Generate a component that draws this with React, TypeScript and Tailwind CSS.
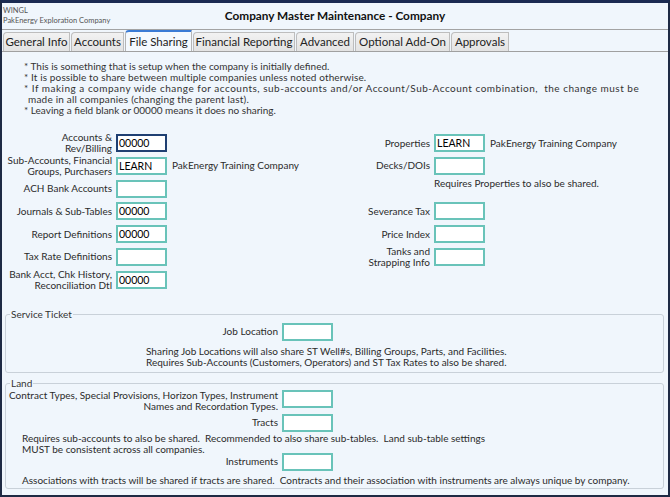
import React from 'react'

const font = { fontFamily: 'Lato, "Open Sans", sans-serif' }

const tabs = [
  { label: 'General Info', w: 'w-[67px]' },
  { label: 'Accounts', w: 'w-[53px]' },
  { label: 'File Sharing', w: 'w-[67px]', active: true },
  { label: 'Financial Reporting', w: 'w-[102px]' },
  { label: 'Advanced', w: 'w-[58px]' },
  { label: 'Optional Add-On', w: 'w-[95px]' },
  { label: 'Approvals', w: 'w-[58px]' },
]

function Box({ value = '', focused = false }: { value?: string; focused?: boolean }) {
  return (
    <input
      readOnly
      value={value}
      className={`h-[18px] w-[51px] shrink-0 bg-white px-[1px] text-[10.5px] text-black outline-none border-2 ${
        focused ? 'border-[#1f3f72]' : 'border-[#69c3b9]'
      }`}
    />
  )
}

function Row({
  label,
  value,
  focused,
  note,
  labelW,
}: {
  label: React.ReactNode
  value?: string
  focused?: boolean
  note?: string
  labelW: string
}) {
  return (
    <div className="flex h-[18px] items-center">
      <div className={`${labelW} shrink-0 pr-[4px] text-right leading-[11px]`}>{label}</div>
      <Box value={value} focused={focused} />
      {note && <span className="ml-[5px] whitespace-nowrap">{note}</span>}
    </div>
  )
}

export default function App() {
  return (
    <div
      className="flex h-[497px] w-[670px] flex-col overflow-hidden border-2 border-t-[3px] border-[#1e2a44] border-t-[#1b2b52] bg-[#f0f6fc] text-[10px] text-[#2b2b2b]"
      style={font}
    >
      {/* Header */}
      <div className="grid h-[26px] shrink-0 grid-cols-[1fr_auto_1fr] items-center">
        <div className="pl-[1px] text-[7.5px] leading-[10px] text-[#555]">
          <div>WINGL</div>
          <div>PakEnergy Exploration Company</div>
        </div>
        <div className="text-[11.8px] font-bold text-[#111]">Company Master Maintenance - Company</div>
        <div />
      </div>
      <div className="h-px shrink-0 bg-[#a3a3a3]" />

      {/* Tabs */}
      <div className="flex h-[22px] shrink-0 items-end gap-[1px] border-b border-[#a0a0a0] pl-[1px]">
        {tabs.map((t) => (
          <div
            key={t.label}
            className={`${t.w} flex shrink-0 items-center justify-center rounded-tl-[4px] border border-b-0 text-[11.5px] text-[#222] ${
              t.active
                ? 'h-[21px] border-[#b5b5b5] border-t-2 border-t-[#3a7bd5] bg-[#f4f9fe]'
                : 'h-[19px] border-[#bdbdbd] bg-gradient-to-b from-[#f2f2f2] to-[#e3e3e3]'
            }`}
          >
            {t.label}
          </div>
        ))}
      </div>

      {/* Notes */}
      <div className="pl-[22px] pt-[9px] leading-[11px] text-[#333]">
        <div>* This is something that is setup when the company is initially defined.</div>
        <div className="tracking-[0.12px]">* It is possible to share between multiple companies unless noted otherwise.</div>
        <div className="whitespace-nowrap tracking-[0.5px]">
          * If making a company wide change for accounts, sub-accounts and/or Account/Sub-Account combination,&nbsp; the change must be
        </div>
        <div className="pl-[4px] tracking-[0.2px]">made in all companies (changing the parent last).</div>
        <div>* Leaving a field blank or 00000 means it does no sharing.</div>
      </div>

      {/* File sharing fields */}
      <div className="mt-[18px] flex">
        <div className="flex w-[348px] shrink-0 flex-col gap-[4.8px]">
          <Row labelW="w-[114px]" value="00000" focused label={<>Accounts &amp;<br />Rev/Billing</>} />
          <Row
            labelW="w-[114px]"
            value="LEARN"
            note="PakEnergy Training Company"
            label={<>Sub-Accounts, Financial<br />Groups, Purchasers</>}
          />
          <Row labelW="w-[114px]" label="ACH Bank Accounts" />
          <Row labelW="w-[114px]" value="00000" label="Journals & Sub-Tables" />
          <Row labelW="w-[114px]" value="00000" label="Report Definitions" />
          <Row labelW="w-[114px]" label="Tax Rate Definitions" />
          <Row
            labelW="w-[114px]"
            value="00000"
            label={<>Bank Acct, Chk History,<br />Reconciliation Dtl</>}
          />
        </div>
        <div className="flex flex-col gap-[4.8px]">
          <Row labelW="w-[84px]" value="LEARN" note="PakEnergy Training Company" label="Properties" />
          <Row labelW="w-[84px]" label="Decks/DOIs" />
          <div className="-mt-[2px] h-[20px] pl-[84px] leading-[11px]">Requires Properties to also be shared.</div>
          <Row labelW="w-[84px]" label="Severance Tax" />
          <Row labelW="w-[84px]" label="Price Index" />
          <Row labelW="w-[84px]" label={<>Tanks and<br />Strapping Info</>} />
        </div>
      </div>

      {/* Service Ticket */}
      <fieldset className="mx-[3px] mt-[20px] mr-[4px] rounded-[3px] border border-[#c9d1d9] pb-[4px]">
        <legend className="ml-[4px] px-[1px] leading-[11px] text-[#333]">Service Ticket</legend>
        <div className="pt-[3px]">
          <Row labelW="w-[276px]" label="Job Location" />
          <div className="mt-[5px] pl-[140px] leading-[11px]">
            <div>Sharing Job Locations will also share ST Well#s, Billing Groups, Parts, and Facilities.</div>
            <div>Requires Sub-Accounts (Customers, Operators) and ST Tax Rates to also be shared.</div>
          </div>
        </div>
      </fieldset>

      {/* Land */}
      <fieldset className="mx-[3px] mt-[5px] mr-[4px] rounded-[3px] border border-[#c9d1d9] pb-[2px]">
        <legend className="ml-[4px] px-[1px] leading-[11px] text-[#333]">Land</legend>
        <div className="pt-[1px]">
          <div className="flex items-start">
            <div className="w-[276px] shrink-0 pr-[4px] text-right leading-[11px]">
              Contract Types, Special Provisions, Horizon Types, Instrument
              <br />
              Names and Recordation Types.
            </div>
            <Box />
          </div>
          <div className="mt-[2px]">
            <Row labelW="w-[276px]" label="Tracts" />
          </div>
          <div className="mt-[1px] pl-[16px] leading-[11px]">
            <div>Requires sub-accounts to also be shared.&nbsp; Recommended to also share sub-tables.&nbsp; Land sub-table settings</div>
            <div>MUST be consistent across all companies.</div>
          </div>
          <div className="-mt-[2px]">
            <Row labelW="w-[276px]" label="Instruments" />
          </div>
          <div className="mt-[4px] pl-[16px] leading-[11px]">
            Associations with tracts will be shared if tracts are shared.&nbsp; Contracts and their association with instruments are always unique by company.
          </div>
        </div>
      </fieldset>
    </div>
  )
}
